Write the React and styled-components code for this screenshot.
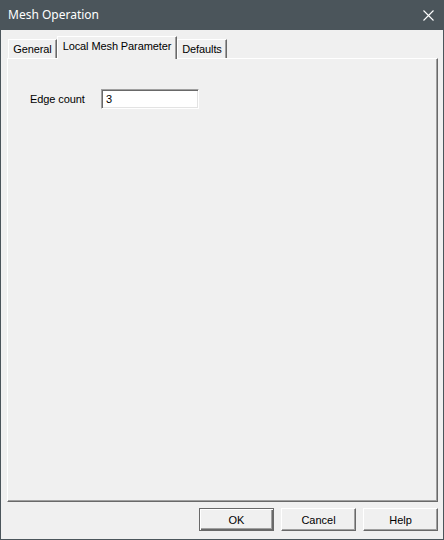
import React from 'react';
import styled, { createGlobalStyle } from 'styled-components';

const GlobalStyle = createGlobalStyle`
  html, body {
    margin: 0;
    padding: 0;
    background: #f0f0f0;
  }
  * {
    box-sizing: border-box;
  }
`;

const uiFont = `"Liberation Sans", Arial, sans-serif`;

const Window = styled.div`
  width: 444px;
  height: 540px;
  display: flex;
  flex-direction: column;
  background: #f0f0f0;
  border: 1px solid #4b555b;
  border-top: none;
  font-family: ${uiFont};
  font-size: 11px;
  color: #000;
`;

const TitleBar = styled.div`
  height: 30px;
  flex: none;
  display: flex;
  align-items: center;
  justify-content: space-between;
  background: #4b555b;
  color: #fff;
  padding: 0 10px 0 8px;
  margin: 0 -1px;
  font-family: "Noto Sans", "Liberation Sans", sans-serif;
  font-size: 12px;
`;

const Title = styled.span`
  padding-bottom: 1px;
`;

const CloseIcon = () => (
  <svg width="11" height="11" viewBox="0 0 11 11">
    <path d="M0.5 0.5 L10.5 10.5 M10.5 0.5 L0.5 10.5" stroke="#fff" strokeWidth="1.1" />
  </svg>
);

const Body = styled.div`
  flex: 1;
  display: flex;
  flex-direction: column;
  padding: 6px 5px 8px 6px;
`;

const TabStrip = styled.div`
  height: 22px;
  flex: none;
  display: flex;
  align-items: flex-end;
  padding-left: 1px;
  position: relative;
  z-index: 1;
`;

const Tab = styled.div`
  width: ${p => p.w}px;
  height: ${p => (p.active ? 23 : 19)}px;
  margin-bottom: ${p => (p.active ? -1 : 0)}px;
  display: flex;
  align-items: center;
  justify-content: center;
  padding-bottom: ${p => (p.active ? 4 : 1)}px;
  background: #f0f0f0;
  border-top: 1px solid #fff;
  border-left: 1px solid #fff;
  border-right: 1px solid #696969;
  box-shadow: inset -1px 0 0 #a0a0a0;
  white-space: nowrap;
  letter-spacing: -0.1px;
`;

const Panel = styled.div`
  flex: 1;
  display: flex;
  flex-direction: column;
  padding: 30px 0 0 22px;
  border-top: 1px solid #fff;
  border-left: 1px solid #fff;
  border-right: 1px solid #696969;
  border-bottom: 1px solid #696969;
  box-shadow: inset -1px -1px 0 #a0a0a0;
`;

const FieldRow = styled.div`
  display: flex;
  align-items: center;
`;

const Label = styled.label`
  width: 71px;
  letter-spacing: -0.1px;
`;

const TextBox = styled.div`
  width: 98px;
  height: 20px;
  display: flex;
  align-items: center;
  padding: 0 0 0 4px;
  background: #fff;
  border-top: 1px solid #a0a0a0;
  border-left: 1px solid #a0a0a0;
  border-right: 1px solid #fff;
  border-bottom: 1px solid #fff;
  box-shadow: inset 1px 1px 0 #696969, inset -1px -1px 0 #e3e3e3;
  font-size: 11px;
`;

const ButtonRow = styled.div`
  flex: none;
  display: flex;
  justify-content: flex-end;
  gap: 7px;
  margin-top: 6px;
`;

const Button = styled.button`
  width: 75px;
  height: 23px;
  padding: 0;
  background: #f0f0f0;
  font-family: ${uiFont};
  font-size: 11px;
  color: #000;
  border-top: 1px solid ${p => (p.primary ? '#696969' : '#fff')};
  border-left: 1px solid ${p => (p.primary ? '#696969' : '#fff')};
  border-right: 1px solid #696969;
  border-bottom: 1px solid #696969;
  box-shadow: ${p =>
    p.primary
      ? 'inset 1px 1px 0 #fff, inset -1px -1px 0 #696969, inset -2px -2px 0 #a0a0a0'
      : 'inset -1px -1px 0 #a0a0a0'};
  border-radius: 0;
`;

export default function App() {
  return (
    <>
      <GlobalStyle />
      <Window>
        <TitleBar>
          <Title>Mesh Operation</Title>
          <CloseIcon />
        </TitleBar>
        <Body>
          <TabStrip>
            <Tab w={49}>General</Tab>
            <Tab w={120} active>Local Mesh Parameter</Tab>
            <Tab w={50}>Defaults</Tab>
          </TabStrip>
          <Panel>
            <FieldRow>
              <Label>Edge count</Label>
              <TextBox>3</TextBox>
            </FieldRow>
          </Panel>
          <ButtonRow>
            <Button primary>OK</Button>
            <Button>Cancel</Button>
            <Button>Help</Button>
          </ButtonRow>
        </Body>
      </Window>
    </>
  );
}
